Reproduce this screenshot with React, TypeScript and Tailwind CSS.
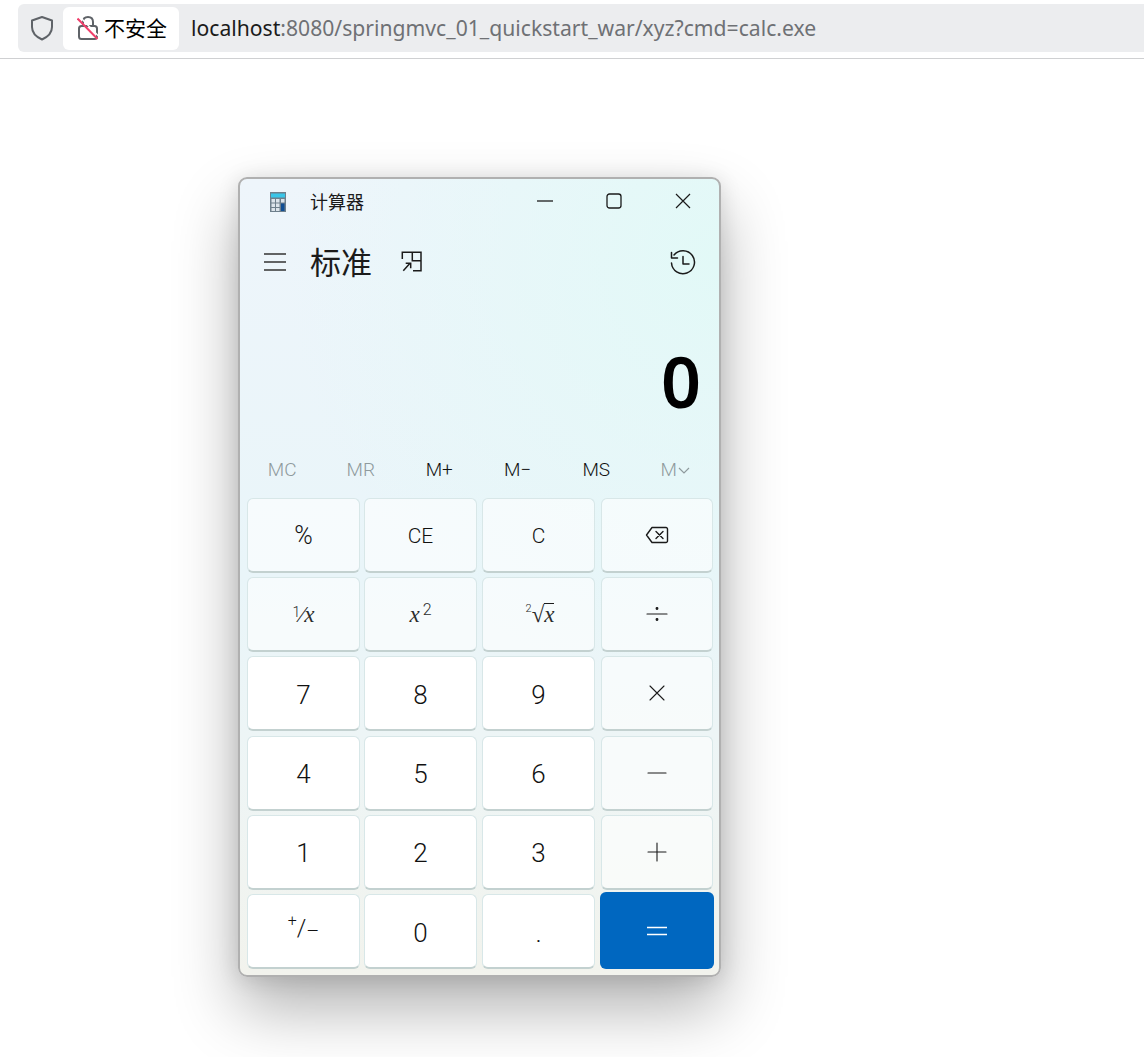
import React from "react";

const cjk = "font-['Noto_Sans','Noto_Sans_CJK_SC',sans-serif]";

function Btn({ children, kind = "op" }: { children: React.ReactNode; kind?: "op" | "num" | "eq" }) {
  if (kind === "eq") {
    return (
      <div className="flex items-center justify-center rounded-[6px] bg-[#0067c0] -ml-[1px] -mr-[1px] -mt-[2px]">{children}</div>
    );
  }
  const cls = kind === "num" ? "bg-white" : "bg-white/60";
  return (
    <div
      className={`flex items-center justify-center rounded-[6px] border-[1.5px] border-b-2 border-[#d8e7e8] border-b-[#c3d1d0] font-['Roboto','Noto_Sans',sans-serif] font-light text-[#111111] bg-clip-padding ${cls}`}
    >
      {children}
    </div>
  );
}

const Sym = ({ children }: { children: React.ReactNode }) => (
  <svg width="32" height="32" viewBox="0 0 32 32" fill="none" stroke="#1b1b1b" strokeWidth="1.1" strokeLinecap="round" strokeLinejoin="round">
    {children}
  </svg>
);

const Num = ({ t }: { t: string }) => <span className="text-[26px] leading-none pt-[3px]">{t}</span>;
const Small = ({ t }: { t: string }) => <span className="text-[21px] leading-none pt-[3px]">{t}</span>;
const Mathx = ({ children }: { children: React.ReactNode }) => (
  <span className="font-['Liberation_Serif',serif] text-[23px] leading-none italic flex items-start text-[#2b2b2b]">{children}</span>
);
const Sup = ({ children, cls }: { children: React.ReactNode; cls: string }) => (
  <span className={`not-italic font-['Roboto'] font-light ${cls}`}>{children}</span>
);

export default function App() {
  return (
    <div className={`w-[1144px] h-[1057px] overflow-hidden bg-white ${cjk}`}>
      <div className="h-[59px] border-b border-[#cfd0d2] pt-[4px] pl-[18px]">
        <div className="h-[48px] rounded-l-[6px] bg-[#ecedef] flex items-center">
          <svg className="ml-[12px]" width="24" height="26" viewBox="0 0 24 26" fill="none" stroke="#5f6368" strokeWidth="2">
            <path d="M12 2 L22 5.5 V12 C22 18 17.5 22 12 24.5 C6.5 22 2 18 2 12 V5.5 Z" strokeLinejoin="round" />
          </svg>
          <div className="ml-[9px] h-[43px] w-[116px] rounded-[6px] bg-white flex items-center pl-[14px]">
            <svg width="22" height="26" viewBox="0 0 22 26" fill="none">
              <path d="M6 11 V7 C6 3.5 8 2 11 2 C14 2 16 3.5 16 7 V11" stroke="#5f6368" strokeWidth="2" />
              <rect x="2" y="11" width="18" height="13" rx="2.5" stroke="#5f6368" strokeWidth="2" />
              <path d="M2.5 1.5 L22 21.5" stroke="#ffffff" strokeWidth="1.5" />
              <path d="M0.5 3.5 L20.5 24" stroke="#f0406c" strokeWidth="2" />
            </svg>
            <span className="ml-[5px] text-[21px] leading-none text-black">不安全</span>
          </div>
          <div className="ml-[12px] text-[21.15px] leading-none whitespace-nowrap text-[#6f7175]">
            <span className="text-[#1b1b1b]">localhost</span>:8080/springmvc_01_quickstart_war/xyz?cmd=calc.exe
          </div>
        </div>
      </div>

      <div className="pl-[238px] pt-[118px]">
        <div className="w-[483px] h-[800px] rounded-[9px] border-2 border-[#b0b0b0] bg-[radial-gradient(ellipse_90%_55%_at_100%_10%,#e2f9f7_0%,#e2f9f700_100%),linear-gradient(180deg,#eef5fb_0%,#e9f5f9_50%,#eef5f5_75%,#f2f3ed_100%)] shadow-[0_32px_64px_rgba(0,0,0,0.3),0_2px_21px_rgba(0,0,0,0.12)] flex flex-col">
          <div className="h-[46px] flex items-center text-[#1b1b1b]">
            <svg className="ml-[29px]" width="18" height="22" viewBox="0 0 18 22">
              <rect x="1" y="1" width="16" height="20" fill="#6e7f8c" />
              <rect x="2" y="2.5" width="14" height="4" fill="#39c5e8" />
              <rect x="2.5" y="8" width="3.5" height="3.5" fill="#dbe3ea" />
              <rect x="7" y="8" width="3.5" height="3.5" fill="#dbe3ea" />
              <rect x="12" y="8" width="3.5" height="3.5" fill="#dbe3ea" />
              <rect x="2.5" y="12.5" width="3.5" height="3.5" fill="#dbe3ea" />
              <rect x="7" y="12.5" width="3.5" height="3.5" fill="#dbe3ea" />
              <rect x="2.5" y="17" width="3.5" height="3" fill="#dbe3ea" />
              <rect x="7" y="17" width="3.5" height="3" fill="#dbe3ea" />
              <rect x="12" y="12.5" width="3.5" height="7.5" fill="#104e94" />
            </svg>
            <span className="ml-[23px] text-[18px] leading-none">计算器</span>
            <div className="ml-auto -mt-[2px] flex items-center">
              <svg width="18" height="18" viewBox="0 0 18 18" stroke="#1b1b1b" strokeWidth="1.3" fill="none"><path d="M1 9 H17" /></svg>
              <svg className="ml-[51px]" width="18" height="18" viewBox="0 0 18 18" stroke="#1b1b1b" strokeWidth="1.3" fill="none"><rect x="2" y="2" width="14" height="14" rx="2.5" /></svg>
              <svg className="ml-[51px] mr-[27px]" width="18" height="18" viewBox="0 0 18 18" stroke="#1b1b1b" strokeWidth="1.2" fill="none"><path d="M2 2 L16 16 M16 2 L2 16" /></svg>
            </div>
          </div>

          <div className="h-[46px] mt-[14px] flex items-center text-[#1b1b1b]">
            <svg className="ml-[23px]" width="24" height="20" viewBox="0 0 24 20" stroke="#333" strokeWidth="1.3" fill="none">
              <path d="M1 2 H23 M1 10 H23 M1 18 H23" />
            </svg>
            <span className="ml-[23px] text-[31px] leading-none">标准</span>
            <svg className="ml-[29px]" width="22" height="22" viewBox="0 0 22 22" stroke="#1b1b1b" strokeWidth="1.5" fill="none">
              <path d="M1.3 8 V1.3 H20 V19.7 H12" />
              <path d="M11.3 1.3 V9.7 H20" />
              <path d="M2.3 19.7 L9 12.3 M4.7 12.3 H9.7 V17.3" />
            </svg>
            <svg className="ml-auto mr-[22px] mt-[2px]" width="28" height="28" viewBox="0 0 28 28" stroke="#1b1b1b" strokeWidth="1.5" fill="none" strokeLinecap="round" strokeLinejoin="round">
              <path d="M5 6 A11.5 11.5 0 1 1 2.5 14" />
              <path d="M2.5 3.5 V9 H8.5" />
              <path d="M14 7.5 V15 H20" />
            </svg>
          </div>

          <div className="h-[166px] flex items-end justify-end pr-[18px] pb-[35px]">
            <span className="text-[70px] leading-none font-semibold text-black">0</span>
          </div>

          <div className="h-[34px] mt-[2px] grid grid-cols-6 text-[19px] font-['Roboto','Noto_Sans',sans-serif] font-light pl-[3px] pr-[5px] items-center text-center text-[#111111]">
            <span className="text-[#8f9a9d]">MC</span>
            <span className="text-[#8f9a9d]">MR</span>
            <span>M+</span>
            <span>M−</span>
            <span>MS</span>
            <span className="text-[#8f9a9d] flex items-center justify-center pl-[2px]">
              M
              <svg width="14" height="14" viewBox="0 0 14 14" stroke="#8f9a9d" strokeWidth="1.2" fill="none"><path d="M2 5 L7 10 L12 5" /></svg>
            </span>
          </div>

          <div className="mt-[11px] ml-[7px] w-[466px] h-[471px] grid grid-cols-[117px_118px_119px_112px] grid-rows-6 gap-y-[4.4px] [&>*:nth-child(4n+1)]:mr-[4px] [&>*:nth-child(4n+2)]:mr-[5px] [&>*:nth-child(4n+3)]:mr-[6px]">
            <Btn><span className="text-[25px] leading-none pt-[2px]">%</span></Btn>
            <Btn><Small t="CE" /></Btn>
            <Btn><Small t="C" /></Btn>
            <Btn>
              <Sym>
                <path d="M5.5 16 L11 8.5 H25 A1.5 1.5 0 0 1 26.5 10 V22 A1.5 1.5 0 0 1 25 23.5 H11 Z" strokeWidth="1.4" />
                <path d="M15 12.5 L22 19.5 M22 12.5 L15 19.5" strokeWidth="1.4" />
              </Sym>
            </Btn>
            <Btn>
              <Mathx><Sup cls="text-[14px] leading-[18px]">1</Sup><span className="not-italic">⁄</span>x</Mathx>
            </Btn>
            <Btn>
              <Mathx>x<Sup cls="text-[16px] leading-[14px] ml-[3px]">2</Sup></Mathx>
            </Btn>
            <Btn>
              <span className="pl-[3px]">
                <Mathx><Sup cls="text-[11px] leading-[12px]">2</Sup><span className="not-italic">√</span><span className="border-t border-[#1b1b1b] leading-[22px]">x</span></Mathx>
              </span>
            </Btn>
            <Btn>
              <Sym>
                <path d="M6 16 H26" />
                <circle cx="16" cy="10.5" r="0.9" fill="#1b1b1b" />
                <circle cx="16" cy="21.5" r="0.9" fill="#1b1b1b" />
              </Sym>
            </Btn>

            <Btn kind="num"><Num t="7" /></Btn>
            <Btn kind="num"><Num t="8" /></Btn>
            <Btn kind="num"><Num t="9" /></Btn>
            <Btn><Sym><path d="M9 9 L23 23 M23 9 L9 23" /></Sym></Btn>

            <Btn kind="num"><Num t="4" /></Btn>
            <Btn kind="num"><Num t="5" /></Btn>
            <Btn kind="num"><Num t="6" /></Btn>
            <Btn><Sym><path d="M7 16 H25" /></Sym></Btn>

            <Btn kind="num"><Num t="1" /></Btn>
            <Btn kind="num"><Num t="2" /></Btn>
            <Btn kind="num"><Num t="3" /></Btn>
            <Btn><Sym><path d="M7 16 H25 M16 7 V25" /></Sym></Btn>

            <Btn kind="num">
              <span className="text-[24px] leading-none flex items-start">
                <span className="text-[16px] leading-[16px]">+</span>
                <span className="mt-[3px]">/</span>
                <span className="text-[20px] leading-[36px]">–</span>
              </span>
            </Btn>
            <Btn kind="num"><Num t="0" /></Btn>
            <Btn kind="num"><Num t="." /></Btn>
            <Btn kind="eq">
              <svg width="32" height="32" viewBox="0 0 32 32" stroke="#fff" strokeWidth="1.3" fill="none"><path d="M6 12.5 H26 M6 19.5 H26" /></svg>
            </Btn>
          </div>
        </div>
      </div>
    </div>
  );
}
